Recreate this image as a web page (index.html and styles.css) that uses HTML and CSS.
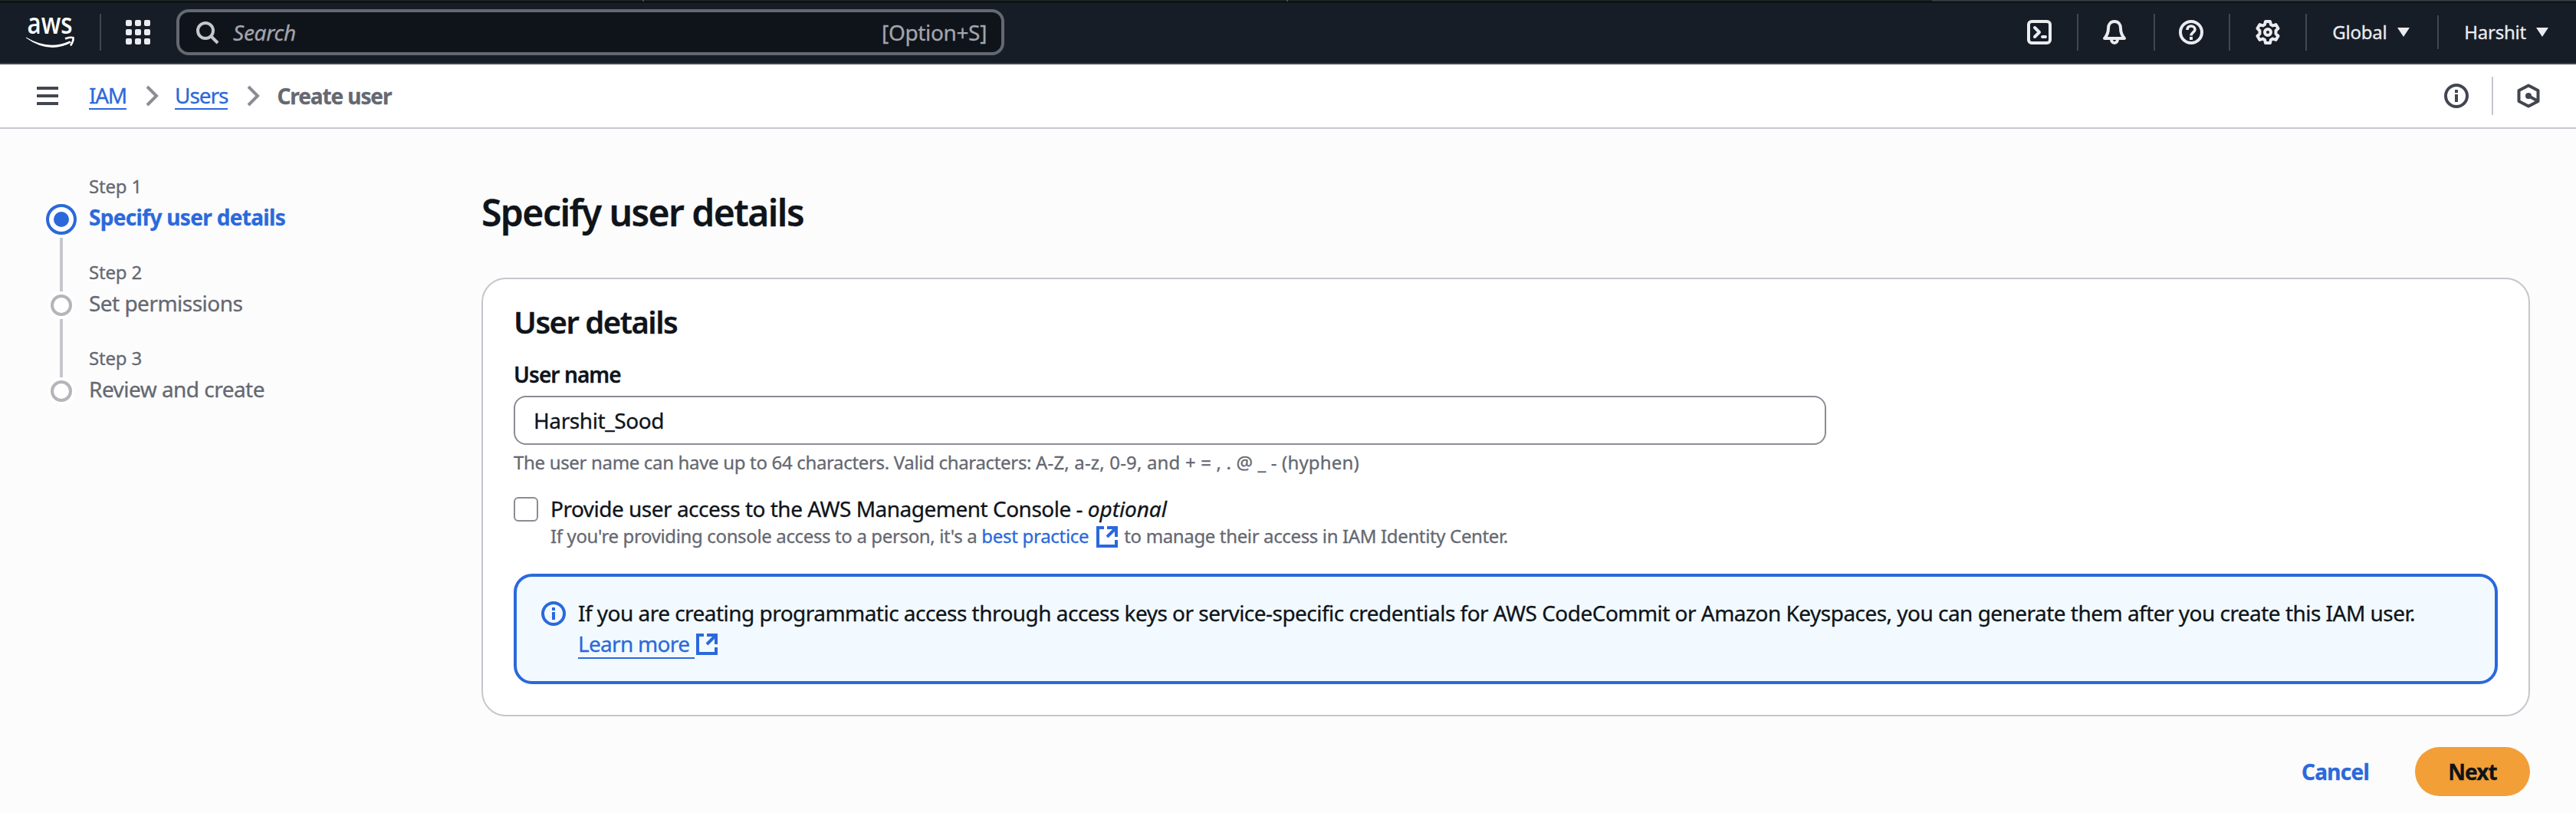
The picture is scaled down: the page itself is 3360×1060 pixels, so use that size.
FILE: index.html
```html
<!DOCTYPE html>
<html lang="en">
<head>
<meta charset="utf-8">
<title>Create user | IAM</title>
<link rel="stylesheet" href="styles.css">
</head>
<body>
<header class="topnav">
  <svg class="logo" width="64" height="44" viewBox="0 0 64 44"><text class="logo-text" x="1.500" y="24" textLength="59" lengthAdjust="spacingAndGlyphs">aws</text><path d="M0 28.500Q29 46 57 33.500L59 35.500Q30 51 0 29.500Z" fill="#fff"/><path d="M51 30.500Q57 28 61.500 29.200Q62 34 58 39.500" fill="none" stroke="#fff" stroke-width="2.600"/></svg>
  <span class="divider divider-logo"></span>
  <svg class="apps" width="32" height="32" viewBox="0 0 32 32" fill="#ebebf0"><rect width="8" height="8" rx="2"/><rect x="12" width="8" height="8" rx="2"/><rect x="24" width="8" height="8" rx="2"/><rect y="12" width="8" height="8" rx="2"/><rect x="12" y="12" width="8" height="8" rx="2"/><rect x="24" y="12" width="8" height="8" rx="2"/><rect y="24" width="8" height="8" rx="2"/><rect x="12" y="24" width="8" height="8" rx="2"/><rect x="24" y="24" width="8" height="8" rx="2"/></svg>
  <div class="search">
    <svg width="32" height="32" viewBox="0 0 32 32" fill="none" stroke="#c6c6cd" stroke-width="4"><circle cx="12" cy="14" r="10"/><path d="M19 21l9 9"/></svg>
    <span class="search-hint">Search</span>
    <span class="search-key">[Option+S]</span>
  </div>
  <nav class="tools">
    <span class="tool tool-shell"><svg width="32" height="32" viewBox="0 0 32 32" fill="none" stroke="#ebebf0" stroke-width="4" stroke-linecap="round" stroke-linejoin="round"><rect x="2" y="2" width="28" height="28" rx="4"/><path d="M10 10l6 6-6 6M20 22h4"/></svg></span>
    <span class="tool tool-bell"><svg width="32" height="32" viewBox="0 0 32 32" fill="none" stroke="#ebebf0" stroke-width="4"><path d="M16 2c-5 0-8 4-8 9 0 6-1.500 9-5 13h26c-3.500-4-5-7-5-13 0-5-3-9-8-9z" stroke-linejoin="round"/><path d="M12 25c0 3 1.500 5 4 5s4-2 4-5"/></svg></span>
    <span class="tool tool-help"><svg width="32" height="32" viewBox="0 0 32 32" fill="none" stroke="#ebebf0"><circle cx="16" cy="16" r="14" stroke-width="4"/><path d="M11 13c0-3.500 2-5 5-5s5 2 5 4.500c0 3.500-5 4-5 8" stroke-width="3.600"/><path d="M16 22v4" stroke-width="4"/></svg></span>
    <span class="tool tool-gear"><svg width="32" height="32" viewBox="0 0 32 32" fill="none" stroke="#ebebf0" stroke-width="4" stroke-linejoin="round"><path d="M13 2h6l1 4 2.500 1.500 4-1.500 3 5-3 3v4l3 3-3 5-4-1.500L20 26l-1 4h-6l-1-4-2.500-1.500-4 1.500-3-5 3-3v-4l-3-3 3-5 4 1.500L12 6z"/><circle cx="16" cy="16" r="4"/></svg></span>
    <span class="menu menu-region"><span>Global</span><svg width="16" height="12" viewBox="0 0 16 12" fill="#ebebf0"><path d="M0 0h16L8 12z"/></svg></span>
    <span class="menu menu-user"><span>Harshit</span><svg width="16" height="12" viewBox="0 0 16 12" fill="#ebebf0"><path d="M0 0h16L8 12z"/></svg></span>
  </nav>
</header>
<div class="crumbbar">
  <svg class="burger" width="28" height="24" viewBox="0 0 28 24" fill="#424650"><path d="M0 0h28v4H0zM0 10h28v4H0zM0 20h28v4H0z"/></svg>
  <nav class="crumbs">
    <a class="crumb crumb-service">IAM</a>
    <svg width="18" height="28" viewBox="0 0 18 28" fill="none" stroke="#8c8c94" stroke-width="4"><path d="M2 2l12 12L2 26"/></svg>
    <a class="crumb crumb-users">Users</a>
    <svg width="18" height="28" viewBox="0 0 18 28" fill="none" stroke="#8c8c94" stroke-width="4"><path d="M2 2l12 12L2 26"/></svg>
    <span class="crumb-current">Create user</span>
  </nav>
  <div class="panels">
    <svg width="32" height="32" viewBox="0 0 32 32" fill="none" stroke="#424650" stroke-width="4"><circle cx="16" cy="16" r="14"/><path d="M16 8v4M16 14v10"/></svg>
    <span class="divider-light"></span>
    <svg width="32" height="32" viewBox="0 0 32 32" fill="none" stroke="#424650" stroke-width="4" stroke-linejoin="round"><path d="M16 2.500L28.500 9v14L16 29.500 3.500 23V9z"/><circle cx="16" cy="16" r="4" fill="#424650" stroke="none"/><path d="M16 16l11 6"/></svg>
  </div>
</div>
<div class="content">
  <aside class="wizard">
    <svg class="rail" width="48" height="266" viewBox="0 0 48 266"><path d="M24 48v70M24 154v76" stroke="#c6c6cd" stroke-width="4"/><circle cx="24" cy="24" r="24" fill="#fff"/><circle cx="24" cy="24" r="18" fill="#fff" stroke="#2b69db" stroke-width="4"/><circle cx="24" cy="24" r="10" fill="#2b69db"/><circle cx="24" cy="136" r="18" fill="#fff"/><circle cx="24" cy="136" r="12" fill="#fff" stroke="#b4b4bb" stroke-width="4"/><circle cx="24" cy="248" r="18" fill="#fff"/><circle cx="24" cy="248" r="12" fill="#fff" stroke="#b4b4bb" stroke-width="4"/></svg>
    <ol class="steps">
      <li class="step"><span class="step-no">Step 1</span><span class="step-name step-active">Specify user details</span></li>
      <li class="step"><span class="step-no">Step 2</span><span class="step-name">Set permissions</span></li>
      <li class="step"><span class="step-no">Step 3</span><span class="step-name">Review and create</span></li>
    </ol>
  </aside>
  <main class="main">
    <h1 class="title">Specify user details</h1>
    <section class="card">
      <h2 class="card-title">User details</h2>
      <label class="label" for="username">User name</label>
      <input class="input" id="username" type="text" value="Harshit_Sood">
      <p class="hint">The user name can have up to 64 characters. Valid characters: <span class="hint-chars">A-Z, a-z, 0-9, and + = , . @ _ - (hyphen)</span></p>
      <div class="check">
        <span class="box"></span>
        <div class="check-text">
          <div class="check-label">Provide user access to the AWS Management Console - <em>optional</em></div>
          <div class="check-desc"><span>If you're providing console access to a person, it's a</span> <a class="link">best practice</a><svg class="ext ext-small" width="28" height="28" viewBox="0 0 28 28" fill="none" stroke="#2b69db" stroke-width="4"><path d="M10 2H2v24h24v-8M14 2h12v12M26 2L14 14"/></svg><span>to manage their access in IAM Identity Center.</span></div>
        </div>
      </div>
      <div class="alert">
        <svg class="alert-icon" width="32" height="32" viewBox="0 0 32 32" fill="none" stroke="#2b69db" stroke-width="4"><circle cx="16" cy="16" r="14"/><path d="M16 8v4M16 14v10"/></svg>
        <div class="alert-text">
          <div>If you are creating programmatic access through access keys or service-specific credentials for AWS CodeCommit or Amazon Keyspaces, you can generate them after you create this IAM user.</div>
          <div class="more-row"><a class="more">Learn more</a><svg class="ext" width="28" height="28" viewBox="0 0 28 28" fill="none" stroke="#2b69db" stroke-width="4"><path d="M10 2H2v24h24v-8M14 2h12v12M26 2L14 14"/></svg></div>
        </div>
      </div>
    </section>
    <div class="actions"><a class="cancel">Cancel</a><button class="next" type="button">Next</button></div>
  </main>
</div>
</body>
</html>
```
FILE: styles.css
```css
* { box-sizing: border-box; }
body {
  margin: 0;
  width: 3360px;
  height: 1060px;
  overflow: hidden;
  background: #fcfcfd;
  color: #0f141a;
  font: 28px/40px "Noto Sans", "Open Sans", sans-serif;
  letter-spacing: -0.53px;
  -webkit-text-stroke: 0.3px;
  white-space: nowrap;
}
svg { flex: none; display: block; }
h1, h2, p, ol { margin: 0; padding: 0; list-style: none; }

.topnav {
  display: flex;
  align-items: center;
  height: 84px;
  padding: 2px 36px 0 34px;
  background:
    linear-gradient(90deg, #1c2220 838px, #4a504e 838px, #4a504e 840px, #1c2220 840px, #1c2220 1678px, #4a504e 1678px, #4a504e 1680px, #1c2220 1680px, #1c2220 2520px, #343a3e 2520px) 0 0 / 100% 2px no-repeat,
    linear-gradient(#000 3px, #161d26 3px);
  border-bottom: 2px solid #424650;
  color: #ebebf0;
}
.logo { overflow: visible; }
.logo-text { font: 600 37px "Open Sans", sans-serif; fill: #fff; letter-spacing: 0; -webkit-text-stroke: 0; }
.divider { width: 2px; height: 48px; background: #424650; }
.divider-logo { margin: 0 32px 0 32px; }
.search {
  display: flex;
  align-items: center;
  width: 1080px;
  height: 60px;
  margin-left: 34px;
  padding: 0 19px 0 22px;
  border: 4px solid #656871;
  border-radius: 16px;
  background: #0f141a;
  color: #a4a4ad;
}
.search-hint { margin-left: 16px; font-style: italic; letter-spacing: -0.25px; }
.search-key { margin-left: auto; letter-spacing: -0.35px; }
.tools { display: flex; align-items: center; margin-left: auto; }
.tool { display: flex; align-items: center; height: 48px; border-right: 2px solid #424650; }
.tool-shell { width: 67px; }
.tool-bell { width: 100px; padding-left: 31px; }
.tool-help { width: 98px; padding-left: 31px; }
.tool-gear { width: 100px; padding-left: 33px; }
.menu { display: flex; align-items: center; gap: 13px; font-size: 24px; letter-spacing: -0.24px; }
.menu-region { height: 44px; width: 172px; padding-left: 33px; border-right: 2px solid #424650; }
.menu-user { padding-left: 33px; }

.crumbbar {
  display: flex;
  align-items: center;
  height: 84px;
  padding: 0 46px 0 48px;
  background: #fff;
  border-bottom: 2px solid #c6c6cd;
}
.crumbs { display: flex; align-items: center; margin-left: 40px; }
.crumbs svg { margin: 0 20px 0 25px; }
.crumb { color: #2b69db; height: 36px; line-height: 34px; border-bottom: 2px solid #2b69db; }
.crumb-service { letter-spacing: -1.26px; }
.crumb-users { letter-spacing: -1.05px; }
.crumb-current { margin-left: 1px; font-weight: 700; color: #656871; letter-spacing: -1.1px; }
.panels { display: flex; align-items: center; margin-left: auto; gap: 30px; }
.divider-light { width: 2px; height: 50px; background: #c6c6cd; }

.content { display: flex; padding-right: 60px; }
.wizard { display: flex; width: 628px; padding: 59px 0 0 56px; }
.rail { margin-top: 35px; }
.steps { margin-left: 12px; color: #656871; }
.step { display: flex; flex-direction: column; align-items: flex-start; height: 112px; }
.step-no { font-size: 24px; line-height: 32px; margin-bottom: 4px; letter-spacing: -0.18px; }
.step-active { color: #2b69db; font-weight: 700; letter-spacing: -0.68px; }

.main { flex: 1; padding-top: 79px; }
.title { font-size: 48px; line-height: 60px; font-weight: 600; letter-spacing: -1.55px; }
.card {
  height: 572px;
  margin-top: 55px;
  padding: 32px 40px 0;
  border: 2px solid #c6c6cd;
  border-radius: 32px;
  background: #fff;
}
.card-title { font-size: 40px; line-height: 48px; font-weight: 600; letter-spacing: -1.5px; }
.label { display: block; margin-top: 24px; font-weight: 600; letter-spacing: -0.92px; }
.input {
  display: block;
  width: 1712px;
  height: 64px;
  margin-top: 8px;
  padding: 0 24px;
  border: 2px solid #8c8c94;
  border-radius: 16px;
  background: #fff;
  color: #0f141a;
  font: inherit;
  letter-spacing: -0.4px;
}
.hint { margin-top: 7px; color: #656871; font-size: 24px; line-height: 32px; letter-spacing: -0.33px; }
.hint-chars { letter-spacing: 0.16px; }
.check { display: flex; margin-top: 24px; }
.box { width: 32px; height: 32px; margin: 5px 16px 0 0; border: 2px solid #8c8c94; border-radius: 6px; background: #fff; }
.check-label { letter-spacing: -0.5px; }
.check-label em { letter-spacing: -0.08px; }
.check-desc { display: flex; gap: 6px; font-size: 24px; line-height: 32px; letter-spacing: -0.36px; color: #656871; }
.link, .more { color: #2b69db; }
.link { letter-spacing: -0.29px; }
.ext-small { margin: 3px 2px 0 4px; }
.alert {
  display: flex;
  height: 144px;
  margin-top: 33px;
  padding: 27px 32px 0;
  border: 4px solid #2b69db;
  border-radius: 24px;
  background: #f2faff;
}
.alert-icon { margin: 5px 16px 0 0; }
.more-row { display: flex; align-items: flex-start; gap: 2px; }
.more-row .ext { margin-top: 7px; }
.more { width: 152px; height: 40px; border-bottom: 2px solid #2b69db; letter-spacing: -0.7px; }
.actions { display: flex; justify-content: flex-end; align-items: center; margin-top: 40px; font-weight: 700; }
.cancel { color: #2b69db; margin-right: 60px; letter-spacing: -0.74px; }
.next {
  width: 150px;
  height: 64px;
  padding: 0;
  border: 0;
  border-radius: 40px;
  background: #f29f38;
  color: #0f141a;
  font: inherit;
  letter-spacing: -0.9px;
}
```
